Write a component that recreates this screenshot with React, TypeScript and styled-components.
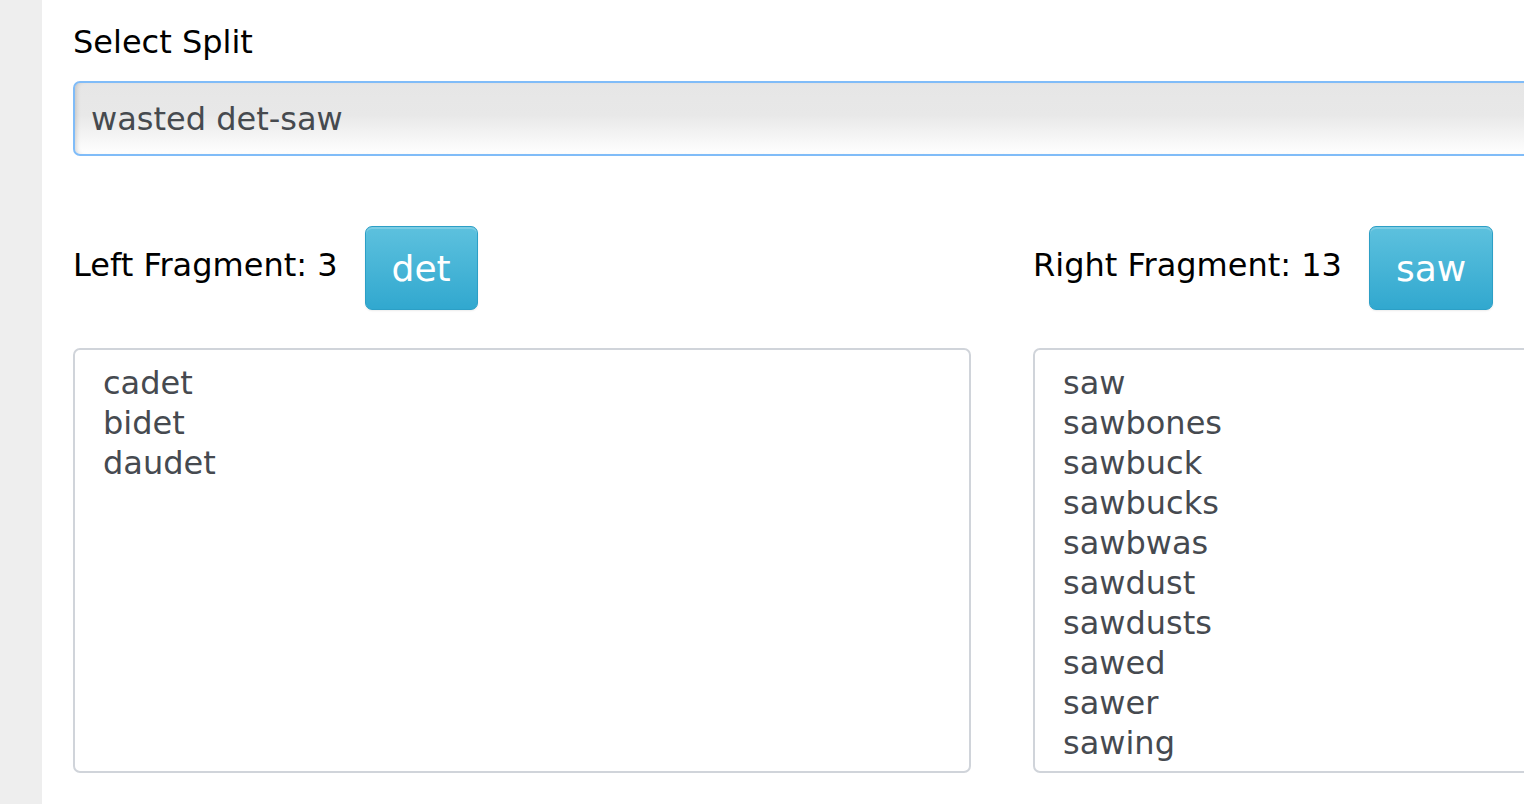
import styled, { createGlobalStyle } from "styled-components";

const GlobalStyle = createGlobalStyle`
  html, body {
    margin: 0;
    padding: 0;
    overflow: hidden;
    background: #ffffff;
  }
`;

const leftWords = ["cadet", "bidet", "daudet"];
// only the rows that fit in the box are rendered
const rightWords = [
  "saw",
  "sawbones",
  "sawbuck",
  "sawbucks",
  "sawbwas",
  "sawdust",
  "sawdusts",
  "sawed",
  "sawer",
  "sawing",
];

interface FragmentProps {
  label: string;
  count: number;
  fragment: string;
  words: string[];
}

const Fragment: React.FC<FragmentProps> = ({ label, count, fragment, words }) => {
  return (
    <Column>
      <FragmentHeader>
        <FragmentLabel>
          {label}: {count}
        </FragmentLabel>
        <FragmentButton>{fragment}</FragmentButton>
      </FragmentHeader>
      <WordList>
        {words.map((word) => (
          <Word key={word}>{word}</Word>
        ))}
      </WordList>
    </Column>
  );
};

const App = () => {
  return (
    <Page>
      <GlobalStyle />
      <SideStrip />
      <Content>
        <FieldLabel>Select Split</FieldLabel>
        <SplitInput type="text" defaultValue="wasted det-saw" />
        <Columns>
          <Fragment label="Left Fragment" count={3} fragment="det" words={leftWords} />
          <Fragment label="Right Fragment" count={13} fragment="saw" words={rightWords} />
        </Columns>
      </Content>
    </Page>
  );
};

const Page = styled.div`
  display: flex;
  width: 100vw;
  height: 100vh;
  overflow: hidden;
  font-family: "DejaVu Sans", Verdana, sans-serif;
`;

const SideStrip = styled.div`
  flex: 0 0 42px;
  background-color: #eeeeee;
`;

const Content = styled.div`
  flex: 0 0 auto;
  width: 1858px;
  padding: 22px 0 0 31px;
  display: flex;
  flex-direction: column;
`;

const FieldLabel = styled.label`
  font-size: 32px;
  line-height: 40px;
  color: #000000;
`;

const SplitInput = styled.input`
  box-sizing: border-box;
  margin-top: 19px;
  width: 100%;
  height: 75px;
  padding: 0 16px;
  font-family: "DejaVu Sans", Verdana, sans-serif;
  font-size: 32px;
  color: #464a4f;
  border: 2px solid #80bcf8;
  border-radius: 7px;
  background: linear-gradient(to bottom, #e6e6e6 0%, #e8e8e8 45%, #ffffff 100%);
  box-shadow: inset 4px 0 5px -3px rgba(0, 0, 0, 0.18);
  outline: none;
`;

const Columns = styled.div`
  display: grid;
  grid-template-columns: 898px 898px;
  column-gap: 62px;
  margin-top: 70px;
`;

const Column = styled.div`
  display: flex;
  flex-direction: column;
`;

const FragmentHeader = styled.div`
  display: flex;
  align-items: center;
  gap: 27px;
  height: 84px;
`;

const FragmentLabel = styled.span`
  font-size: 32px;
  color: #000000;
  white-space: nowrap;
  padding-bottom: 7px;
`;

const FragmentButton = styled.button`
  box-sizing: border-box;
  height: 84px;
  padding: 0 26px;
  font-family: "DejaVu Sans", Verdana, sans-serif;
  font-size: 36px;
  color: #ffffff;
  background: linear-gradient(to bottom, #5dc1de 0%, #31a8cf 100%);
  border: 1px solid #2c9fc6;
  border-radius: 7px;
  box-shadow: inset 0 2px 0 rgba(255, 255, 255, 0.2), 0 1px 2px rgba(0, 0, 0, 0.08);
  cursor: pointer;
`;

const WordList = styled.div`
  box-sizing: border-box;
  margin-top: 38px;
  height: 425px;
  padding: 13px 28px 12px;
  border: 2px solid #d0d4da;
  border-radius: 7px;
  overflow: hidden;
  background: #ffffff;
`;

const Word = styled.div`
  font-size: 32px;
  line-height: 40px;
  color: #464a50;
`;

export default App;
